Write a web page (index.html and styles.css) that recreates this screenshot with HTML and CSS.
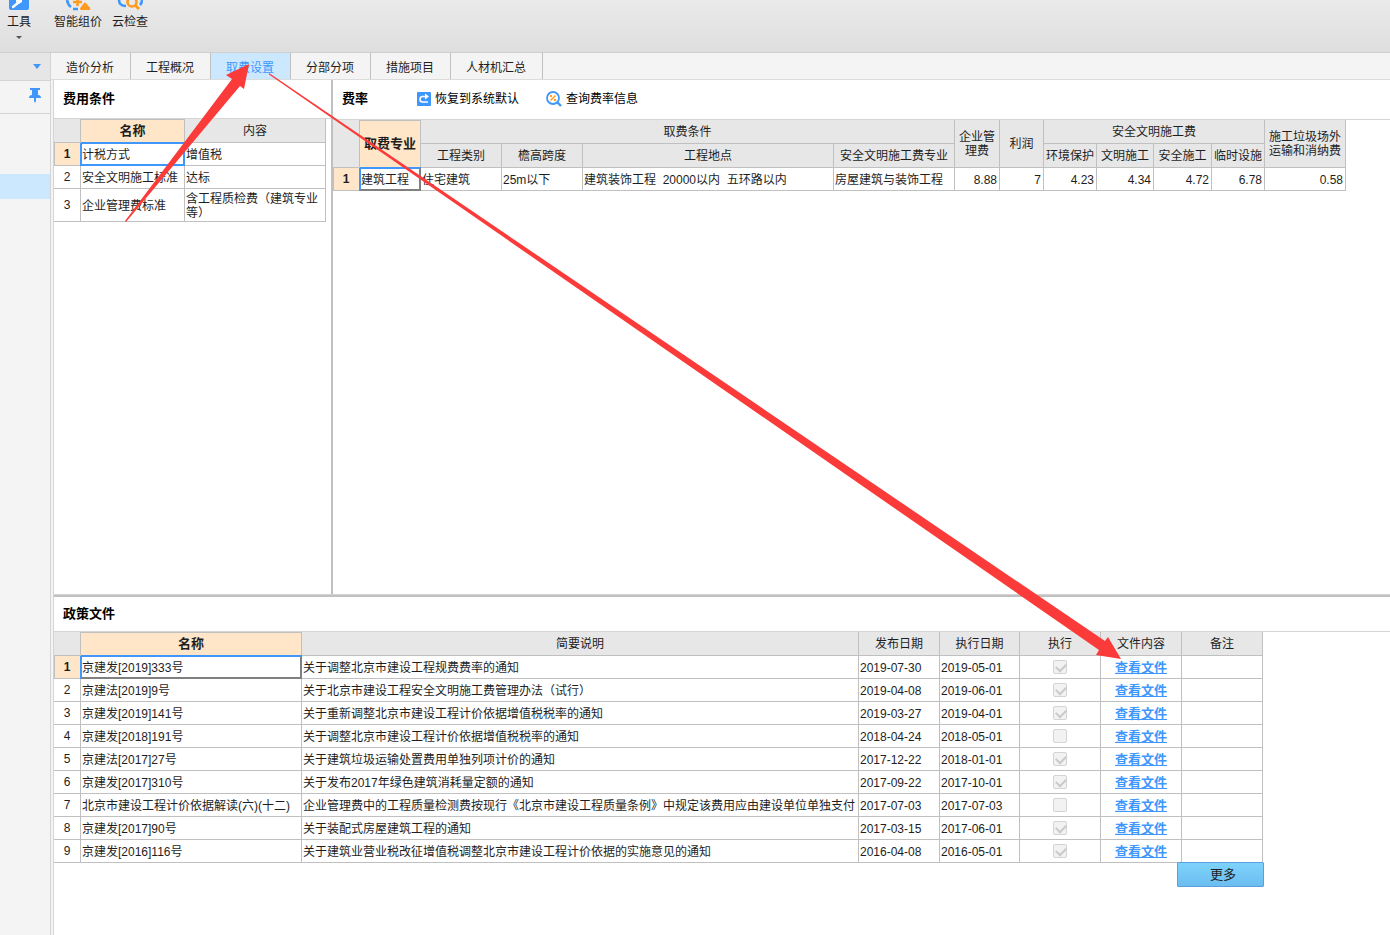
FILE: index.html
```html
<!DOCTYPE html>
<html lang="zh-CN">
<head>
<meta charset="utf-8">
<title>取费设置</title>
<link rel="stylesheet" href="styles.css">
</head>
<body>
<header class="toolbar">
  <button class="tool tool-menu" type="button">
    <svg class="tool-icon" width="22" height="12" viewBox="0 0 22 12"><path d="M1 0h20v8q0 2-2 2H3q-2 0-2-2z" fill="#3f97fb"/><path d="M5 7l6-5" stroke="#fff" stroke-width="2.4" stroke-linecap="round"/><path d="M8 0v2l3 2 3-2V0z" fill="#fff"/></svg>
    <span>工具</span>
    <svg class="caret" width="6" height="3" viewBox="0 0 6 3"><path d="M0 0h6L3 3z" fill="#555"/></svg>
  </button>
  <button class="tool" type="button">
    <svg class="tool-icon" width="26" height="12" viewBox="0 0 26 12"><path d="M2 0q1 5 4 7M8 9h5" fill="none" stroke="#3f97fb" stroke-width="2.6"/><path d="M8 2h9M12.500 0v6" stroke="#ff9a1f" stroke-width="2.6"/><path d="M16 7l3-4q1-1 2 0l4 5q1 2-1 2h-8q-2-1 0-3z" fill="#ff9a1f"/></svg>
    <span>智能组价</span>
  </button>
  <button class="tool" type="button">
    <svg class="tool-icon" width="26" height="12" viewBox="0 0 26 12"><path d="M2 0q0 6 7 6M23 5q2-2 2-5" fill="none" stroke="#3f97fb" stroke-width="2.6"/><circle cx="15" cy="2" r="4.500" fill="none" stroke="#ff9a1f" stroke-width="2.6"/><path d="M18 5l4 4" stroke="#ff9a1f" stroke-width="2.8"/></svg>
    <span>云检查</span>
  </button>
</header>
<div class="workspace">
  <aside class="sidebar">
    <button class="side-drop" type="button" aria-label="展开"><svg width="8" height="5" viewBox="0 0 8 5"><path d="M0 0h8L4 5z" fill="#3f97fb"/></svg></button>
    <button class="side-pin" type="button" aria-label="固定"><svg width="12" height="16" viewBox="0 0 12 16"><path d="M1 0h10v2H9v5q3 0 3 3H7v3l-1 2-1-2v-3H0q0-3 3-3V2H1z" fill="#3f97fb"/></svg></button>
    <div class="side-selected"></div>
  </aside>
  <main class="main">
    <nav class="tabs">
      <button class="tab" type="button">造价分析</button>
      <button class="tab" type="button">工程概况</button>
      <button class="tab tab-active" type="button">取费设置</button>
      <button class="tab" type="button">分部分项</button>
      <button class="tab" type="button">措施项目</button>
      <button class="tab" type="button">人材机汇总</button>
    </nav>
    <div class="panels">
      <div class="upper">
        <section class="panel conditions">
          <div class="panel-head"><h2>费用条件</h2></div>
          <table class="grid grid-conditions">
            <colgroup><col class="w27"><col class="w104"><col class="w141"></colgroup>
            <thead><tr class="r24"><th></th><th class="current">名称</th><th>内容</th></tr></thead>
            <tbody>
              <tr><th class="current">1</th><td class="focus focus-blue">计税方式</td><td>增值税</td></tr>
              <tr><th>2</th><td>安全文明施工标准</td><td>达标</td></tr>
              <tr class="r33"><th>3</th><td>企业管理费标准</td><td class="wrap">含工程质检费（建筑专业等）</td></tr>
            </tbody>
          </table>
        </section>
        <section class="panel rates">
          <div class="panel-head panel-head-rates">
            <h2>费率</h2>
            <button class="action" type="button"><svg width="14" height="14" viewBox="0 0 14 14"><rect width="14" height="14" rx="1" fill="#3f97fb"/><path d="M9 4.500H5.500Q3 4.500 3 7.250T5.500 10H11" fill="none" stroke="#fff" stroke-width="1.600"/><path d="M8 1.500l4 3-4 3z" fill="#fff"/></svg>恢复到系统默认</button>
            <button class="action" type="button"><svg width="16" height="16" viewBox="0 0 16 16"><circle cx="7" cy="7" r="6" fill="none" stroke="#3f97fb" stroke-width="1.800"/><path d="M11 11l4 4" stroke="#3f97fb" stroke-width="2.400"/><path d="M4.500 9.500l5-5" stroke="#ff9a1f" stroke-width="1.400"/><circle cx="5" cy="5" r="1.200" fill="#ff9a1f"/><circle cx="9" cy="9" r="1.200" fill="#ff9a1f"/></svg>查询费率信息</button>
          </div>
          <table class="grid grid-rates">
            <colgroup><col class="w27"><col class="w61"><col class="w81"><col class="w81"><col class="w251"><col class="w121"><col class="w45"><col class="w44"><col class="w53"><col class="w57"><col class="w58"><col class="w53"><col class="w81"></colgroup>
            <thead>
              <tr class="r24"><th rowspan="2"></th><th rowspan="2" class="current">取费专业</th><th colspan="4">取费条件</th><th rowspan="2" class="wrap">企业管理费</th><th rowspan="2">利润</th><th colspan="4">安全文明施工费</th><th rowspan="2" class="wrap">施工垃圾场外运输和消纳费</th></tr>
              <tr class="r24"><th>工程类别</th><th>檐高跨度</th><th>工程地点</th><th>安全文明施工费专业</th><th>环境保护</th><th>文明施工</th><th>安全施工</th><th>临时设施</th></tr>
            </thead>
            <tbody>
              <tr><th class="current">1</th><td class="focus">建筑工程</td><td>住宅建筑</td><td>25m以下</td><td class="spaced">建筑装饰工程  20000以内  五环路以内</td><td>房屋建筑与装饰工程</td><td class="num">8.88</td><td class="num">7</td><td class="num">4.23</td><td class="num">4.34</td><td class="num">4.72</td><td class="num">6.78</td><td class="num">0.58</td></tr>
            </tbody>
          </table>
        </section>
      </div>
      <section class="panel policies">
        <div class="panel-head panel-head-policies"><h2>政策文件</h2></div>
        <div class="policy-body">
          <table class="grid grid-policies">
            <colgroup><col class="w27"><col class="w221"><col class="w557"><col class="w81"><col class="w80"><col class="w81"><col class="w81"><col class="w81"></colgroup>
            <thead><tr class="r24"><th></th><th class="current">名称</th><th>简要说明</th><th>发布日期</th><th>执行日期</th><th>执行</th><th>文件内容</th><th>备注</th></tr></thead>
            <tbody>
              <tr><th class="current">1</th><td class="focus">京建发[2019]333号</td><td>关于调整北京市建设工程规费费率的通知</td><td>2019-07-30</td><td>2019-05-01</td><td class="mid check"><input type="checkbox" aria-label="执行" checked disabled></td><td class="mid"><a href="#">查看文件</a></td><td></td></tr>
              <tr><th>2</th><td>京建法[2019]9号</td><td>关于北京市建设工程安全文明施工费管理办法（试行）</td><td>2019-04-08</td><td>2019-06-01</td><td class="mid check"><input type="checkbox" aria-label="执行" checked disabled></td><td class="mid"><a href="#">查看文件</a></td><td></td></tr>
              <tr><th>3</th><td>京建发[2019]141号</td><td>关于重新调整北京市建设工程计价依据增值税税率的通知</td><td>2019-03-27</td><td>2019-04-01</td><td class="mid check"><input type="checkbox" aria-label="执行" checked disabled></td><td class="mid"><a href="#">查看文件</a></td><td></td></tr>
              <tr><th>4</th><td>京建发[2018]191号</td><td>关于调整北京市建设工程计价依据增值税税率的通知</td><td>2018-04-24</td><td>2018-05-01</td><td class="mid check"><input type="checkbox" aria-label="执行" disabled></td><td class="mid"><a href="#">查看文件</a></td><td></td></tr>
              <tr><th>5</th><td>京建法[2017]27号</td><td>关于建筑垃圾运输处置费用单独列项计价的通知</td><td>2017-12-22</td><td>2018-01-01</td><td class="mid check"><input type="checkbox" aria-label="执行" checked disabled></td><td class="mid"><a href="#">查看文件</a></td><td></td></tr>
              <tr><th>6</th><td>京建发[2017]310号</td><td>关于发布2017年绿色建筑消耗量定额的通知</td><td>2017-09-22</td><td>2017-10-01</td><td class="mid check"><input type="checkbox" aria-label="执行" checked disabled></td><td class="mid"><a href="#">查看文件</a></td><td></td></tr>
              <tr><th>7</th><td>北京市建设工程计价依据解读(六)(十二)</td><td>企业管理费中的工程质量检测费按现行《北京市建设工程质量条例》中规定该费用应由建设单位单独支付</td><td>2017-07-03</td><td>2017-07-03</td><td class="mid check"><input type="checkbox" aria-label="执行" disabled></td><td class="mid"><a href="#">查看文件</a></td><td></td></tr>
              <tr><th>8</th><td>京建发[2017]90号</td><td>关于装配式房屋建筑工程的通知</td><td>2017-03-15</td><td>2017-06-01</td><td class="mid check"><input type="checkbox" aria-label="执行" checked disabled></td><td class="mid"><a href="#">查看文件</a></td><td></td></tr>
              <tr><th>9</th><td>京建发[2016]116号</td><td>关于建筑业营业税改征增值税调整北京市建设工程计价依据的实施意见的通知</td><td>2016-04-08</td><td>2016-05-01</td><td class="mid check"><input type="checkbox" aria-label="执行" checked disabled></td><td class="mid"><a href="#">查看文件</a></td><td></td></tr>
            </tbody>
          </table>
          <button class="more" type="button">更多</button>
        </div>
      </section>
    </div>
  </main>
</div>
<svg class="arrows" width="1390" height="935" viewBox="0 0 1390 935" aria-hidden="true"><g fill="#fb3b3a"><path d="M125 221L232 79L226 75L249 64L244 89L240 86L126 222Z"/><path d="M269 73L1105 641L1108 637L1121 659L1096 655L1099 650L269 74.500Z"/></g></svg>
</body>
</html>
```
FILE: styles.css
```css
* { box-sizing: border-box; }
body {
  margin: 0;
  height: 100vh;
  display: flex;
  flex-direction: column;
  overflow: hidden;
  background: #fff;
  color: #1e1e1e;
  font: 12px/14px "Liberation Sans", "Noto Sans CJK SC", sans-serif;
}
button { margin: 0; padding: 0; border: 0; background: none; color: inherit; font: inherit; }
svg { display: block; flex: none; }
h2 { margin: 0; font-size: 13px; line-height: 16px; color: #000; }

.toolbar {
  flex: none;
  display: flex;
  align-items: flex-start;
  gap: 10px;
  padding: 0 7px;
  height: 53px;
  background: linear-gradient(#eaeaea, #dedede);
  border-bottom: 1px solid #cfcfcf;
}
.tool { display: flex; flex-direction: column; align-items: center; gap: 3px; }
.tool-menu { margin-right: 13px; }
.caret { margin-top: 4px; }

.workspace { flex: 1; min-height: 0; display: flex; }
.sidebar { flex: none; width: 51px; background: #f4f4f4; border-right: 1px solid #d4d4d4; }
.side-drop, .side-pin { display: flex; justify-content: flex-end; align-items: center; width: 100%; border-bottom: 1px solid #d4d4d4; }
.side-drop { height: 28px; padding-right: 9px; background: #e6e6e6; }
.side-pin { height: 33px; padding: 0 9px 2px 0; }
.side-selected { margin-top: 60px; height: 25px; background: #cce8ff; }

.main { flex: 1; min-width: 0; display: flex; flex-direction: column; background: #f4f4f4; }
.tabs { flex: none; display: flex; height: 27px; border-bottom: 1px solid #dcdcdc; }
.tab { padding: 3px 16px 0 15px; border-right: 1px solid #c0c0c0; white-space: nowrap; }
.tab-active { background: #cce8ff; color: #3f97fb; }

.panels { flex: 1; min-height: 0; display: flex; flex-direction: column; margin-left: 2px; border-left: 1px solid #d4d4d4; }
.upper { flex: 516 1 0; min-height: 0; display: flex; border-bottom: 1px solid #d4d4d4; }
.panel { background: #fff; min-width: 0; }
.conditions { flex: none; width: 277px; }
.rates { flex: 1; border-left: 2px solid #c0c0c0; }
.policies { flex: 339 1 0; border-top: 2px solid #c0c0c0; }
.panel-head { display: flex; align-items: center; height: 39px; padding-left: 9px; border-bottom: 1px solid #d4d4d4; }
.panel-head-rates { height: 40px; padding-bottom: 1px; }
.panel-head-rates h2 { margin-right: 49px; }
.panel-head-policies { height: 35px; }
.action { display: flex; align-items: center; gap: 4px; margin-right: 27px; color: #000; }

.grid { border-collapse: separate; border-spacing: 0; table-layout: fixed; }
.grid-conditions { width: 272px; }
.grid-rates { width: 1013px; }
.grid-policies { width: 1209px; }
.grid th, .grid td { padding: 2px 1px 0; border-right: 1px solid #c0c0c0; border-bottom: 1px solid #c0c0c0; white-space: nowrap; }
.grid th { padding: 0; font-weight: normal; text-align: center; }
.grid td { text-align: left; }
.grid tr { height: 23px; }
.grid .r24 { height: 24px; }
.grid .r33 { height: 33px; }
.grid thead th { background: #e7e7e7; }
.grid tbody th { padding-bottom: 1px; }
.grid .current { background: #ffe6c8; font-weight: bold; font-size: 13px; box-shadow: inset 0 1px #c0c0c0, -1px 0 #c0c0c0; }
.grid tbody .current { font-size: 12px; box-shadow: inset 1px 0 #c0c0c0; }
.grid .focus { box-shadow: inset 0 1px #3f97fb, 0 -1px #3f97fb, inset 1px 0 #3f97fb, -1px 0 #3f97fb, inset -1px -1px #808080; border-color: #808080; }
.grid .focus-blue { box-shadow: inset 0 0 0 1px #3f97fb, 0 -1px #3f97fb, -1px 0 #3f97fb; border-color: #3f97fb; }
.grid .wrap { white-space: normal; }
.grid .spaced { white-space: pre; }
.grid .num { padding-right: 2px; text-align: right; }
.grid .mid { text-align: center; }
.grid .check { padding: 0 1px; }
.grid a { color: #3f97fb; font-size: 13px; font-weight: bold; }
.grid input { appearance: none; display: block; margin: 0 auto; width: 14px; height: 14px; border: 1px solid #d4d4d4; border-radius: 2px; background: #f2f2f2; }
.grid input:checked::after { content: ""; display: block; width: 8px; height: 5px; margin: 2px; border: solid #cacaca; border-width: 0 0 2px 2px; transform: rotate(-45deg); }

.w27 { width: 27px; } .w44 { width: 44px; } .w45 { width: 45px; }
.w53 { width: 53px; } .w57 { width: 57px; } .w58 { width: 58px; } .w61 { width: 61px; }
.w80 { width: 80px; } .w81 { width: 81px; } .w104 { width: 104px; } .w121 { width: 121px; }
.w141 { width: 141px; } .w221 { width: 221px; } .w251 { width: 251px; } .w557 { width: 557px; }

.policy-body { display: flex; flex-direction: column; width: max-content; }
.more { align-self: flex-end; width: 87px; height: 25px; margin: -1px -1px 0 0; padding-left: 5px; border: 1px solid #5a9fe0; border-radius: 1px; background: linear-gradient(#7dd3fb, #6cbdf0); font-size: 13px; z-index: 1; }

.arrows { position: absolute; left: 0; top: 0; pointer-events: none; }
```
